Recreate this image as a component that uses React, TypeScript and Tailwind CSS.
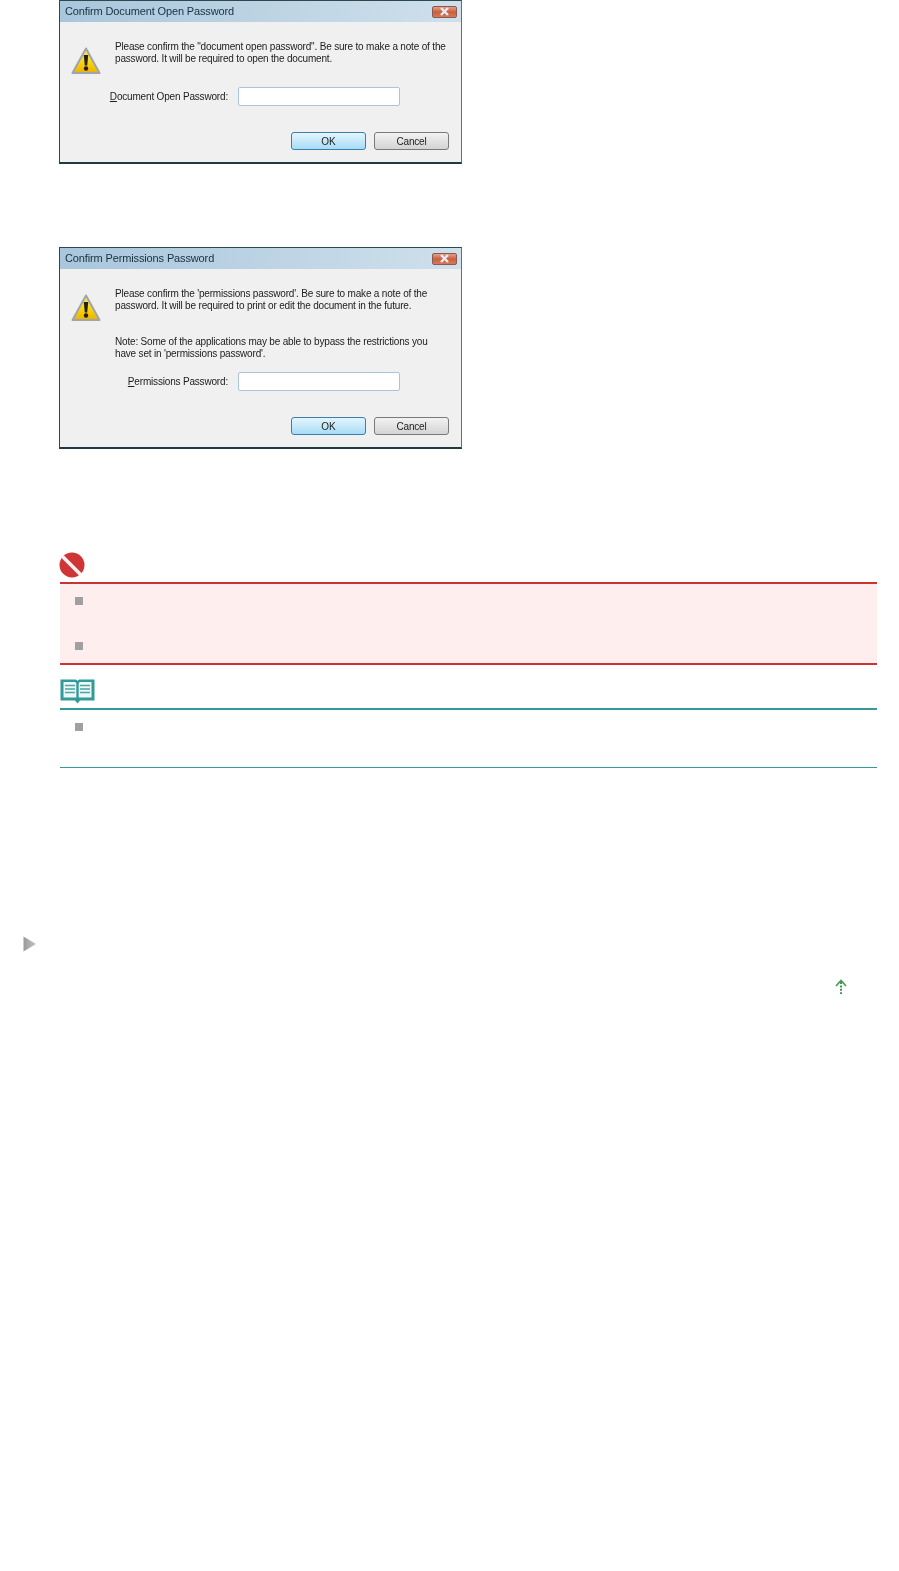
import React from "react";

function Warning() {
  return (
    <svg width="30" height="28" viewBox="0 0 30 28" className="shrink-0">
      <defs>
        <linearGradient id="wg" x1="0" y1="0" x2="0" y2="1">
          <stop offset="0" stopColor="#fbe870" />
          <stop offset="0.55" stopColor="#f8d610" />
          <stop offset="1" stopColor="#ecb000" />
        </linearGradient>
      </defs>
      <path d="M15 1.5 L28.5 26 L1.5 26 Z" fill="url(#wg)" stroke="#a0a4ac" strokeWidth="2" strokeLinejoin="round" />
      <path d="M12.8 8 L17.2 8 L16.2 18.5 L13.8 18.5 Z" fill="#241e0c" />
      <circle cx="15" cy="21.5" r="2.2" fill="#241e0c" />
    </svg>
  );
}

function CloseBtn() {
  return (
    <div className="w-[25px] h-[12px] rounded-[2px] border border-[#8a5a50] bg-gradient-to-b from-[#e3a088] via-[#c8603f] to-[#d87858] flex items-center justify-center">
      <svg width="11" height="9" viewBox="0 0 11 9">
        <path d="M2 1 L9 8 M9 1 L2 8" stroke="#e8ecf2" strokeWidth="2.4" />
      </svg>
    </div>
  );
}

function Dialog({
  title,
  label,
  underlined,
  paragraphs,
}: {
  title: string;
  label: string;
  underlined: string;
  paragraphs: string[][];
}) {
  return (
    <div className="ml-[-1px] w-[403px] border border-[#2c4a4e] border-r-[#3f7f86] border-b-[2px] border-b-[#1d3b40] bg-[#f0f0f0] blur-[0.5px] font-['Liberation_Sans',sans-serif] text-[#1c1c1c]">
      <div className="h-[21px] pl-[5px] pr-[4px] flex items-center justify-between bg-gradient-to-r from-[#a9c6dc] to-[#cfe0ec]">
        <span className="text-[11px] tracking-[-0.012em] text-[#16303f]">{title}</span>
        <CloseBtn />
      </div>
      <div className="flex flex-col pl-[11px] pt-[19px] pb-[12px]">
        <div className="flex gap-[14px]">
          <div className="pt-[6px]">
            <Warning />
          </div>
          <div className="flex flex-col gap-[24px] text-[10px] leading-[12px] tracking-[-0.018em] whitespace-nowrap">
            {paragraphs.map((p, i) => (
              <p key={i}>
                {p.map((l, j) => (
                  <span key={j} className="block">
                    {l}
                  </span>
                ))}
              </p>
            ))}
          </div>
        </div>
        <div className="flex items-center justify-end w-[329px] gap-[10px] mt-[12px]">
          <span className="text-[10px] tracking-[-0.018em]">
            <span className="underline">{underlined}</span>
            {label}
          </span>
          <div className="w-[162px] h-[19px] bg-white rounded-[2px] border border-[#a9c5da]" />
        </div>
        <div className="flex justify-end gap-[8px] mt-[26px] pr-[12px]">
          <div className="w-[75px] h-[18px] rounded-[3px] border border-[#3a7fae] bg-gradient-to-b from-[#e4f5fd] to-[#a8dcf6] flex items-center justify-center text-[10px]">
            OK
          </div>
          <div className="w-[75px] h-[18px] rounded-[3px] border border-[#7a7a7a] bg-gradient-to-b from-[#f2f2f2] to-[#d4d4d4] flex items-center justify-center text-[10px] tracking-[-0.018em]">
            Cancel
          </div>
        </div>
      </div>
    </div>
  );
}

function ErrorIcon() {
  return (
    <svg width="26" height="26" viewBox="0 0 26 26" className="ml-[-1px] block">
      <circle cx="13" cy="13" r="12.5" fill="#cf3535" />
      <path d="M3 4 L22 23" stroke="#fdf2f2" strokeWidth="3.6" />
    </svg>
  );
}

function BookIcon() {
  return (
    <svg width="35" height="25" viewBox="0 0 35 25" className="block">
      <path d="M0.5 0.5 H15 C16 0.5 17 1 17.5 2 C18 1 19 0.5 20 0.5 H34.5 V21.5 H20 L17.5 24.5 L15 21.5 H0.5 Z" fill="#339999" />
      <path d="M3.5 3 H14.5 C15.5 3 16.3 3.7 16.3 4.7 V18.5 H3.5 Z M18.7 4.7 C18.7 3.7 19.5 3 20.5 3 H31.5 V18.5 H18.7 Z" fill="#eef8f8" />
      <path d="M5 6.5 H15 M5 10 H15 M5 13.5 H15 M20 6.5 H30 M20 10 H30 M20 13.5 H30" stroke="#4aa5a5" strokeWidth="1.5" />
    </svg>
  );
}

function Bullet() {
  return <div className="w-[8px] h-[8px] bg-[#a0a0a0]" />;
}

export default function App() {
  return (
    <div className="min-h-[1571px] bg-white pl-[60px] w-[899px]">
      <Dialog
        title="Confirm Document Open Password"
        underlined="D"
        label="ocument Open Password:"
        paragraphs={[
          [
            "Please confirm the \"document open password\". Be sure to make a note of the",
            "password. It will be required to open the document.",
          ],
        ]}
      />
      <div className="mt-[83px]">
        <Dialog
          title="Confirm Permissions Password"
          underlined="P"
          label="ermissions Password:"
          paragraphs={[
            [
              "Please confirm the 'permissions password'. Be sure to make a note of the",
              "password. It will be required to print or edit the document in the future.",
            ],
            [
              "Note: Some of the applications may be able to bypass the restrictions you",
              "have set in 'permissions password'.",
            ],
          ]}
        />
      </div>

      <div className="mt-[103px] w-[817px]">
        <ErrorIcon />
        <div className="mt-[4px] h-[83px] border-y-2 border-[#cc3333] bg-[#feeeed] pl-[15px] pt-[13px] flex flex-col gap-[37px]">
          <Bullet />
          <Bullet />
        </div>
        <div className="mt-[14px]">
          <BookIcon />
        </div>
        <div className="mt-[4px] h-[60px] border-t-2 border-b border-t-[#339999] border-b-[#339999] pl-[15px] pt-[13px]">
          <Bullet />
        </div>
      </div>

      <div className="ml-[-37px] mt-[168px]">
        <svg width="14" height="16" viewBox="0 0 14 16" className="block">
          <defs>
            <linearGradient id="tg" x1="0" y1="0" x2="1" y2="0">
              <stop offset="0" stopColor="#999999" />
              <stop offset="1" stopColor="#c4c4c4" />
            </linearGradient>
          </defs>
          <path d="M0.5 0.5 L13 8 L0.5 15.5 Z" fill="url(#tg)" />
        </svg>
      </div>
      <div className="ml-[774px] mt-[27px]">
        <svg width="14" height="15" viewBox="0 0 14 15" className="block">
          <path d="M2 7 L7 1.5 L12 7" fill="none" stroke="#3f9a4f" strokeWidth="1.6" />
          <path d="M7 3 V15" stroke="#2f8a3f" strokeWidth="1.8" strokeDasharray="2 1.4" />
        </svg>
      </div>
    </div>
  );
}
